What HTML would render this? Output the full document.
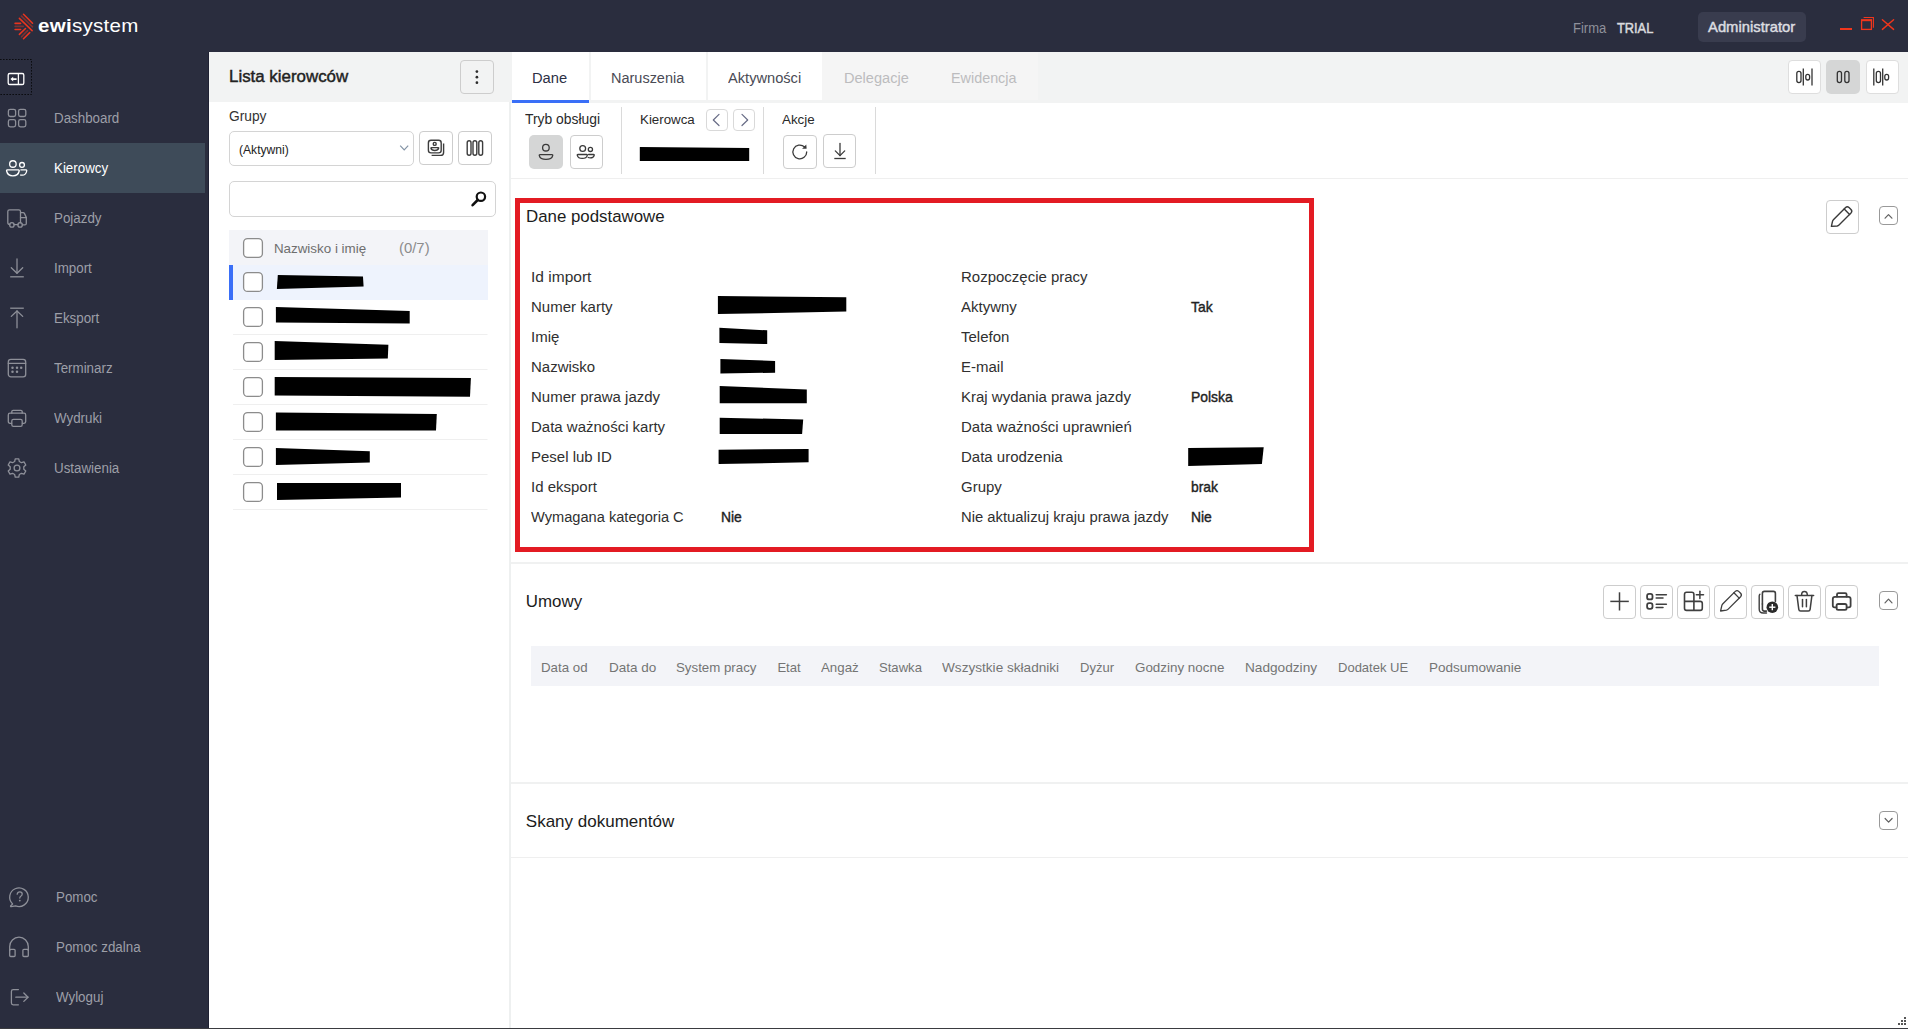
<!DOCTYPE html>
<html><head><meta charset="utf-8">
<style>
*{box-sizing:border-box;margin:0;padding:0}
html,body{width:1908px;height:1029px;overflow:hidden;background:#fff;font-family:"Liberation Sans",sans-serif;position:relative}
.a{position:absolute}
#top{left:0;top:0;width:1908px;height:52px;background:#2a2d3e}
#side{left:0;top:52px;width:209px;height:977px;background:#2a2d3e}
.mt{left:54px;font-size:14px;color:#a4a6ad;white-space:nowrap;line-height:16px}
.mt.on{color:#fff}
svg{overflow:visible}
.tx{white-space:nowrap;transform-origin:0 0}
.tab{top:68px;font-size:15px;line-height:18px;white-space:nowrap}
.lbl{font-size:13.5px;color:#2a2a2a;line-height:16px;white-space:nowrap}
.h2{font-size:16.5px;color:#1e1e1e;line-height:20px;white-space:nowrap}
.th{top:660px;font-size:13.5px;color:#7a7a7a;line-height:16px;white-space:nowrap}
.fl{font-size:14.7px;color:#262626;line-height:18px;white-space:nowrap}
.fv{font-size:14px;color:#1d1d1d;font-weight:bold;line-height:18px;white-space:nowrap}
.btn{border:1px solid #cdcdcd;border-radius:4px;background:#fff}
</style></head><body>
<div id="top" class="a">
<svg class="a" style="left:0;top:0" width="40" height="44" viewBox="0 0 40 44">
<g stroke="#e8351f" stroke-width="1.6" stroke-linecap="round" fill="none">
<line x1="23.5" y1="14.3" x2="32.5" y2="23.2"/>
<line x1="19.4" y1="18.4" x2="32.1" y2="30.6"/>
<line x1="15.1" y1="23.4" x2="20.6" y2="23.4"/>
<line x1="15.1" y1="29.5" x2="20.6" y2="29.5"/>
<line x1="19.4" y1="34.4" x2="25.5" y2="28.5"/>
<line x1="23.5" y1="38.7" x2="29.7" y2="32.6"/>
</g>
<g stroke="#e8351f" stroke-opacity="0.45" stroke-width="1.6" stroke-linecap="round" fill="none">
<line x1="21.4" y1="16.1" x2="32.5" y2="26.8"/>
<line x1="15.1" y1="26.4" x2="23.2" y2="26.4"/>
<line x1="21.6" y1="36.8" x2="27.5" y2="30.6"/>
</g>
</svg>
<div class="a" id="logo" style="left:38.3px;top:15px;font-size:19px;color:#fff;letter-spacing:0.25px;white-space:nowrap;transform:scaleX(1.08);transform-origin:0 0"><b>ewi</b>system</div>
<div class="a" style="left:1698px;top:12px;width:108px;height:30px;background:#393c4e;border-radius:5px"></div>
<svg class="a" style="left:0;top:0" width="1908" height="52" viewBox="0 0 1908 52">
<g stroke="#f0361c" fill="none">
<line x1="1840" y1="29" x2="1852" y2="29" stroke-width="2"/>
<rect x="1861.6" y="20.2" width="9.8" height="9.2" stroke-width="1.3"/>
<rect x="1861" y="19.2" width="11" height="2" fill="#f0361c" stroke="none"/>
<path d="M1863.6 17.5 H1873.4 V27.7" stroke-width="1.1"/>
<line x1="1882.4" y1="19.7" x2="1893.6" y2="29.4" stroke-width="1.4" stroke-linecap="round"/>
<line x1="1893.6" y1="19.7" x2="1882.4" y2="29.4" stroke-width="1.4" stroke-linecap="round"/>
</g></svg>
</div>
<div id="side" class="a">

</div>
<svg class="a" style="left:0;top:0" width="209" height="1029" viewBox="0 0 209 1029">
<rect x="0" y="143" width="205" height="50" fill="#3e4b59"/>
<path d="M0 59.5 H31.5 V94.5 H0" fill="none" stroke="#0b0c10" stroke-width="1" stroke-dasharray="1.6 1.4"/>
<g fill="none" stroke="#fff" stroke-width="1.3">
<rect x="8.2" y="73.5" width="15.6" height="11" rx="1.6"/>
<line x1="18.4" y1="73.5" x2="18.4" y2="84.5"/>
</g>
<path d="M10.4 79.1 L13.2 76.7 V78.3 H16.6 V79.9 H13.2 V81.5Z" fill="#fff"/>
<g fill="none" stroke="#8e9099" stroke-width="1.3" stroke-linejoin="round" stroke-linecap="round">
<rect x="8.4" y="109.3" width="7.2" height="7.2" rx="1.8"/>
<rect x="18.6" y="109.3" width="7.2" height="7.2" rx="1.8"/>
<rect x="8.4" y="119.7" width="7.2" height="7.2" rx="1.8"/>
<rect x="18.6" y="119.7" width="7.2" height="7.2" rx="1.8"/>
</g>
<g fill="none" stroke="#fff" stroke-width="1.3">
<circle cx="12.9" cy="164" r="3.25"/>
<circle cx="22" cy="164.9" r="2.4"/>
<path d="M7.1 169.9 H18.7 Q19.4 169.9 19.2 171 Q18.2 175.8 12.9 175.8 Q7.6 175.8 6.6 171 Q6.4 169.9 7.1 169.9Z"/>
<path d="M20.4 169.9 H26.2 Q26.9 169.9 26.7 171 Q25.9 175.2 22.3 175.2 Q21 175.2 20.2 174.8"/>
</g>
<g fill="none" stroke="#8e9099" stroke-width="1.3" stroke-linejoin="round" stroke-linecap="round">
<path d="M9.8 224.6 Q7.8 224.6 7.8 222.6 V211.6 Q7.8 209.9 9.5 209.9 H18.8 Q20.5 209.9 20.5 211.6 V222.8"/>
<path d="M20.5 212.6 H23.2 Q24 212.6 24.4 213.4 L26.3 217.4 V223.4 Q26.3 224.9 24.8 224.9 H22.4"/>
<line x1="20.5" y1="217.6" x2="26.3" y2="217.6"/>
<line x1="14.1" y1="224.6" x2="17.9" y2="224.6"/>
<circle cx="11.9" cy="224.9" r="2.2"/>
<circle cx="20.1" cy="224.9" r="2.2"/>
<line x1="17" y1="259" x2="17" y2="273"/>
<path d="M11.3 267.8 L17 273.3 L22.7 267.8"/>
<line x1="10.2" y1="276.8" x2="23.8" y2="276.8" stroke-linecap="butt"/>
<line x1="10.2" y1="308.2" x2="23.8" y2="308.2" stroke-linecap="butt"/>
<path d="M11.3 316.4 L17 311 L22.7 316.4"/>
<line x1="17" y1="311" x2="17" y2="327.8"/>
<rect x="8.3" y="359.4" width="17.4" height="17.4" rx="2.6"/>
<line x1="8.3" y1="363.3" x2="25.7" y2="363.3"/>
<path d="M11.8 413 V411.6 Q11.8 410.3 13.1 410.3 H20.9 Q22.2 410.3 22.2 411.6 V413"/>
<path d="M11.6 423.3 H10 Q8.3 423.3 8.3 421.6 V415 Q8.3 413.2 10 413.2 H24 Q25.7 413.2 25.7 415 V421.6 Q25.7 423.3 24 423.3 H22.4"/>
<rect x="11.8" y="419.4" width="10.4" height="6.9" rx="1.6"/>
<path d="M19.36 461.52 L18.77 458.87 L15.23 458.87 L14.64 461.52 L12.56 462.71 L9.98 461.90 L8.21 464.97 L10.20 466.80 L10.20 469.20 L8.21 471.03 L9.98 474.10 L12.56 473.29 L14.64 474.48 L15.23 477.13 L18.77 477.13 L19.36 474.48 L21.44 473.29 L24.02 474.10 L25.79 471.03 L23.80 469.20 L23.80 466.80 L25.79 464.97 L24.02 461.90 L21.44 462.71Z"/>
<circle cx="17" cy="468" r="2.9"/>
</g>
<g fill="#8e9099">
<circle cx="12.5" cy="367.7" r="1.25"/><circle cx="17" cy="367.7" r="1.25"/><circle cx="21.2" cy="367.7" r="1.25"/>
<circle cx="12.5" cy="371.8" r="1.25"/><circle cx="17" cy="371.8" r="1.25"/>
</g>
<g fill="none" stroke="#8e9099" stroke-width="1.3" stroke-linejoin="round" stroke-linecap="round">
<path d="M12.6 904 A9.3 9.3 0 1 1 15.6 905.9 L11.2 906.6 Q10.4 906.7 10.6 905.9Z"/>
<path d="M17.2 894.2 Q17.4 891.8 19.8 891.8 Q22.2 891.8 22.2 894 Q22.2 895.4 20.8 896.2 Q19.8 896.8 19.8 898"/>
<path d="M9.7 950.5 V946.5 A9.3 9.3 0 0 1 28.3 946.5 V950.5"/>
<rect x="9.7" y="949.3" width="5.4" height="7.2" rx="1"/>
<rect x="22.9" y="949.3" width="5.4" height="7.2" rx="1"/>
<path d="M18.4 989.6 H13.2 Q11.4 989.6 11.4 991.4 V1003 Q11.4 1004.8 13.2 1004.8 H18.4"/>
<line x1="15.8" y1="997.2" x2="28" y2="997.2"/>
<path d="M23.8 993 L28 997.2 L23.8 1001.4"/>
</g>
<circle cx="19.8" cy="900.6" r="0.9" fill="#8e9099"/>
<line x1="208.5" y1="52" x2="208.5" y2="1029" stroke="#1f2133" stroke-width="1"/>
</svg>

<!-- LEFT PANEL -->
<div class="a" style="left:209px;top:52px;width:1699px;height:50px;background:#f2f3f3"></div>
<div class="a" style="left:511px;top:102px;width:1397px;height:1px;background:#f2f3f3"></div>
<div class="a" style="left:509px;top:102px;width:2px;height:926px;background:#eef0f0"></div>
<div class="a btn" style="left:459.5px;top:59.5px;width:34.5px;height:34.5px;background:#f2f3f3"></div>
<svg class="a" style="left:0;top:0" width="510" height="1029" viewBox="0 0 510 1029">
<g fill="#2b2b2b"><circle cx="476.9" cy="71.6" r="1.35"/><circle cx="476.9" cy="77.2" r="1.35"/><circle cx="476.9" cy="82.7" r="1.35"/></g>
</svg>
<div class="a" style="left:229px;top:130.5px;width:184.5px;height:35px;border:1px solid #d4d4d4;border-radius:5px;background:#fff"></div>
<div class="a btn" style="left:419px;top:131px;width:33.5px;height:33.5px"></div>
<div class="a btn" style="left:458px;top:131px;width:33.5px;height:33.5px"></div>
<div class="a" style="left:229px;top:181px;width:266.5px;height:35.5px;border:1px solid #d4d4d4;border-radius:5px;background:#fff"></div>
<div class="a" style="left:229px;top:230px;width:258.5px;height:35px;background:#f3f4f8"></div>
<div class="a" style="left:229px;top:265px;width:258.5px;height:35px;background:#eef3fd"></div>
<div class="a" style="left:229px;top:265px;width:4px;height:35px;background:#3a6ff7"></div>
<svg class="a" style="left:0;top:0" width="510" height="1029" viewBox="0 0 510 1029">
<path d="M400.2 145.6 L404.2 149.9 L408.2 145.6" fill="none" stroke="#8494a6" stroke-width="1.2"/>
<g fill="none" stroke="#3d3d3d" stroke-width="1.4" stroke-linejoin="round">
<rect x="428.4" y="140.3" width="12.8" height="12.6" rx="2.6"/>
<circle cx="434.7" cy="143.9" r="1.5"/>
<path d="M431.4 147.6 H438.3 Q438.8 147.6 438.6 148.3 Q438 150.5 434.8 150.5 Q431.6 150.5 431 148.3 Q430.8 147.6 431.4 147.6Z"/>
<path d="M443.6 143.6 V152.4 Q443.6 155.4 440.6 155.4 H431.6"/>
<rect x="467.2" y="140.8" width="3.8" height="14.4" rx="1.9"/>
<rect x="473" y="140.8" width="3.8" height="14.4" rx="1.9"/>
<rect x="478.8" y="140.8" width="3.8" height="14.4" rx="1.9"/>
</g>
<g fill="none" stroke="#111" stroke-width="2.2" stroke-linecap="round">
<circle cx="480.9" cy="196.7" r="4.2"/>
<line x1="477.7" y1="200" x2="472.6" y2="205.2" stroke-width="2.6"/>
</g>
<g fill="none" stroke="#efefef" stroke-width="1">
<line x1="233" y1="334.5" x2="487.5" y2="334.5"/>
<line x1="233" y1="369.5" x2="487.5" y2="369.5"/>
<line x1="233" y1="404.5" x2="487.5" y2="404.5"/>
<line x1="233" y1="439.5" x2="487.5" y2="439.5"/>
<line x1="233" y1="474.5" x2="487.5" y2="474.5"/>
<line x1="233" y1="509.5" x2="487.5" y2="509.5"/>
</g>
<g fill="#fff" stroke="#8c8c8c" stroke-width="1.3">
<rect x="243.6" y="238.6" width="18.8" height="18.8" rx="4"/>
<rect x="243.6" y="272.6" width="18.8" height="18.8" rx="4"/>
<rect x="243.6" y="307.6" width="18.8" height="18.8" rx="4"/>
<rect x="243.6" y="342.6" width="18.8" height="18.8" rx="4"/>
<rect x="243.6" y="377.6" width="18.8" height="18.8" rx="4"/>
<rect x="243.6" y="412.6" width="18.8" height="18.8" rx="4"/>
<rect x="243.6" y="447.6" width="18.8" height="18.8" rx="4"/>
<rect x="243.6" y="482.6" width="18.8" height="18.8" rx="4"/>
</g>
<g fill="#000">
<polygon points="277.8,275.1 363,276.6 363.6,286.5 276.9,288.9"/>
<polygon points="275.9,306.9 409.7,311 409.7,323.5 275.9,322.6"/>
<polygon points="274.7,341 388.4,344.8 387.8,358.5 274.7,359.9"/>
<polygon points="274.7,376.9 470.9,378 470,396.7 274.7,395.5"/>
<polygon points="275.9,412.4 436.8,413.9 436,430.5 275.9,430.5"/>
<polygon points="275.9,448 369.8,451.2 369.8,462.6 275.9,464.9"/>
<polygon points="277,483 401,483 401,497.6 277,499.9"/>
</g>
</svg>

<!-- RIGHT PANEL -->
<div class="a" style="left:512px;top:52px;width:76.5px;height:48px;background:#fff"></div>
<div class="a" style="left:512px;top:99.6px;width:76.8px;height:3px;background:#3a6ff7"></div>
<div class="a" style="left:590.8px;top:52px;width:115.3px;height:48px;background:#fff"></div>
<div class="a" style="left:707.5px;top:52px;width:114.5px;height:48px;background:#fff"></div>
<div class="a" style="left:822px;top:52px;width:108.2px;height:48px;background:#f5f5f5"></div>
<div class="a" style="left:930.2px;top:52px;width:108px;height:48px;background:#f5f5f5"></div>
<div class="a btn" style="left:1787.5px;top:60.3px;width:33px;height:33.3px;border-color:#dedede"></div>
<div class="a" style="left:1826.4px;top:60.3px;width:33.2px;height:33.3px;background:#d5d6d6;border-radius:5px"></div>
<div class="a btn" style="left:1865.5px;top:60.3px;width:33px;height:33.3px;border-color:#dedede"></div>

<div class="a" style="left:529px;top:135px;width:34px;height:34px;background:#d5d6d6;border-radius:5px"></div>
<div class="a btn" style="left:569.5px;top:135px;width:33.2px;height:34px"></div>
<div class="a" style="left:621px;top:107px;width:1px;height:67px;background:#dadada"></div>
<div class="a btn" style="left:706px;top:109.4px;width:21.7px;height:21.3px;border-color:#d9d9d9"></div>
<div class="a btn" style="left:733.4px;top:109.4px;width:21.2px;height:21.3px;border-color:#d9d9d9"></div>
<div class="a" style="left:763px;top:107px;width:1px;height:67px;background:#dadada"></div>
<div class="a btn" style="left:783.2px;top:135.2px;width:33.6px;height:33.4px"></div>
<div class="a btn" style="left:823.3px;top:134.4px;width:33.2px;height:33.3px"></div>
<div class="a" style="left:875px;top:107px;width:1px;height:67px;background:#dadada"></div>
<div class="a" style="left:511px;top:177.5px;width:1397px;height:1px;background:#efefef"></div>

<div class="a" style="left:515px;top:198px;width:799px;height:353.5px;border:5px solid #e31b23"></div>
<svg class="a" style="left:0;top:0" width="1908" height="1029" viewBox="0 0 1908 1029"><g fill="#000">
<polygon points="717.9,296.1 846.3,297.2 846.3,311.6 717.9,314.1"/>
<polygon points="719.4,327.8 767.2,330.3 767.2,344 719.4,342.9"/>
<polygon points="720.4,359.1 775.1,360.9 775.1,372.7 720.4,373.5"/>
<polygon points="719.7,386 806.8,389.6 806.8,403.3 719.7,403.3"/>
<polygon points="719.7,417.7 803.2,419.5 802.1,433.9 719.7,433.9"/>
<polygon points="718.6,449.7 808.6,449 808.6,462.3 718.6,464.1"/>
<polygon points="1188.2,447.9 1263.7,447.2 1261.9,464.1 1188.2,465.9"/>
<polygon points="639.8,147 749.2,148.1 749.2,161 639.8,161"/>
</g></svg>
<div class="a btn" style="left:1825.5px;top:200.3px;width:33px;height:33.3px"></div>
<div class="a btn" style="left:1879.1px;top:206.1px;width:18.6px;height:18.6px;border-color:#999;border-radius:4px"></div>
<div class="a" style="left:511px;top:562px;width:1397px;height:2px;background:#f0f1f1"></div>

<div class="a btn" style="left:1603.3px;top:585.3px;width:33.1px;height:33.4px"></div>
<div class="a btn" style="left:1640.3px;top:585.3px;width:33.1px;height:33.4px"></div>
<div class="a btn" style="left:1677.2px;top:585.3px;width:33.1px;height:33.4px"></div>
<div class="a btn" style="left:1714.4px;top:585.3px;width:33.1px;height:33.4px"></div>
<div class="a btn" style="left:1751.3px;top:585.3px;width:33.1px;height:33.4px"></div>
<div class="a btn" style="left:1788.4px;top:585.3px;width:33.1px;height:33.4px"></div>
<div class="a btn" style="left:1825.3px;top:585.3px;width:33.1px;height:33.4px"></div>
<div class="a btn" style="left:1879.2px;top:591.4px;width:18.6px;height:18.6px;border-color:#999;border-radius:4px"></div>
<div class="a" style="left:531px;top:646px;width:1348px;height:39.5px;background:#f3f4f8"></div>
<div class="a" style="left:511px;top:782px;width:1397px;height:2px;background:#f0f1f1"></div>

<div class="a btn" style="left:1879.3px;top:811.2px;width:18.6px;height:18.6px;border-color:#999;border-radius:4px"></div>
<div class="a" style="left:511px;top:857px;width:1397px;height:1px;background:#efefef"></div>
<svg class="a" style="left:0;top:0" width="1908" height="1029" viewBox="0 0 1908 1029">
<g fill="none" stroke="#3a3a3a" stroke-width="1.3" stroke-linejoin="round" stroke-linecap="round">
<!-- person -->
<circle cx="545.9" cy="147.7" r="3.3"/>
<path d="M540 154.6 H552 Q552.9 154.6 552.7 155.6 Q551.8 159.4 546 159.4 Q540.2 159.4 539.3 155.6 Q539.1 154.6 540 154.6Z"/>
<!-- people -->
<circle cx="582.7" cy="148.5" r="2.9"/>
<circle cx="590.4" cy="149.4" r="2.1"/>
<path d="M577.9 154.5 H586.7 Q587.5 154.5 587.3 155.3 Q586.5 158.4 582.3 158.4 Q578.1 158.4 577.3 155.3 Q577.1 154.5 577.9 154.5Z"/>
<path d="M588.6 154.5 H593.6 Q594.4 154.5 594.2 155.3 Q593.6 157.9 590.3 157.9 Q589 157.9 588.2 157.5"/>
<!-- refresh -->
<path d="M806.7 151.9 A6.9 6.9 0 1 1 804.4 146.8"/>
<!-- download -->
<line x1="840" y1="143.4" x2="840" y2="155.5"/>
<path d="M835.3 150.9 L840 155.6 L844.7 150.9"/>
<line x1="834.3" y1="158.5" x2="845.7" y2="158.5" stroke-linecap="butt"/>
</g>
<g fill="none" stroke="#686c86" stroke-width="1.2" stroke-linejoin="round" stroke-linecap="round">
<path d="M719 114.4 L713.3 120 L719 125.5"/>
<path d="M742 114.4 L747.7 120 L742 125.5"/>
</g>
<polygon points="802.1,148.7 806.3,144.6 806.6,148.7" fill="#3a3a3a"/>
<!-- layout icons -->
<g fill="none" stroke="#333" stroke-width="1.3" stroke-linejoin="round">
<rect x="1796.8" y="71.4" width="4.2" height="11.3" rx="2.1"/>
<line x1="1803.3" y1="68.5" x2="1803.3" y2="85.4"/>
<rect x="1805.8" y="74.3" width="3.8" height="5.7" rx="1.9"/>
<line x1="1812" y1="68.5" x2="1812" y2="85.4"/>
<rect x="1837.3" y="71.4" width="4.2" height="11.3" rx="2.1"/>
<rect x="1844.8" y="71.4" width="4.2" height="11.3" rx="2.1"/>
<line x1="1873.8" y1="68.5" x2="1873.8" y2="85.4"/>
<rect x="1876.3" y="71.4" width="4.2" height="11.3" rx="2.1"/>
<line x1="1882.7" y1="68.5" x2="1882.7" y2="85.4"/>
<rect x="1884.8" y="74.3" width="3.8" height="5.7" rx="1.9"/>
</g>
<!-- pencil edit (Dane) -->
<g fill="none" stroke="#3a3a3a" stroke-width="1.4" stroke-linejoin="round" stroke-linecap="round">
<path d="M1831.4 226.4 L1832.5 221.4 Q1832.8 220.4 1833.6 219.6 L1845.6 207.6 Q1847.3 206 1849 207.6 L1851 209.6 Q1852.6 211.3 1851 213 L1839 225 Q1838.2 225.8 1837.2 226 Z"/>
<line x1="1844.2" y1="209" x2="1849.6" y2="214.4"/>
<!-- chevrons -->
<g stroke="#606060" stroke-width="1.2">
<path d="M1885.1 218.2 L1888.5 214.6 L1891.9 218.2"/>
<path d="M1885 602.8 L1888.5 599.2 L1892 602.8"/>
<path d="M1885.1 818.5 L1888.6 822.1 L1892.1 818.5"/>
</g>
</g>
<g fill="none" stroke="#3f3f3f" stroke-width="1.5" stroke-linejoin="round" stroke-linecap="round">
<!-- plus -->
<line x1="1610.3" y1="601.4" x2="1628.8" y2="601.4" stroke-linecap="butt"/>
<line x1="1619.5" y1="592.3" x2="1619.5" y2="610.5" stroke-linecap="butt"/>
<!-- list -->
<rect x="1647.1" y="593.8" width="5.4" height="5.6" rx="2" stroke-width="1.8"/>
<rect x="1647.1" y="603.2" width="5.4" height="5.6" rx="2" stroke-width="1.8"/>
<line x1="1656.2" y1="594.8" x2="1666.4" y2="594.8"/>
<line x1="1656.2" y1="598.1" x2="1663" y2="598.1"/>
<line x1="1656.2" y1="604.2" x2="1666.4" y2="604.2"/>
<line x1="1656.2" y1="607.5" x2="1663" y2="607.5"/>
<!-- grid add -->
<path d="M1684.5 601.4 V594.4 Q1684.5 592.3 1686.6 592.3 H1691.8 Q1693.9 592.3 1693.9 594.4 V610.4 M1684.5 601.4 V608.3 Q1684.5 610.4 1686.6 610.4 H1700.2 Q1702.3 610.4 1702.3 608.3 V603.5 Q1702.3 601.4 1700.2 601.4 H1684.5" stroke-width="1.6"/>
<line x1="1699.9" y1="591.2" x2="1699.9" y2="598.4"/>
<line x1="1696.3" y1="594.8" x2="1703.5" y2="594.8"/>
<!-- pencil -->
<path d="M1720.6 611 L1721.8 605.6 Q1722.1 604.6 1722.9 603.8 L1735.3 591.4 Q1737 589.8 1738.7 591.4 L1740.6 593.3 Q1742.2 595 1740.6 596.7 L1728.2 609.1 Q1727.4 609.9 1726.4 610.1 Z" stroke-width="1.3"/>
<line x1="1733.9" y1="592.8" x2="1739.2" y2="598.1" stroke-width="1.3"/>
<!-- copy add -->
<path d="M1762.4 604 V593.4 Q1762.4 591.4 1764.4 591.4 H1773.4 Q1775.4 591.4 1775.4 593.4 V601.4" stroke-width="1.6"/>
<path d="M1762.4 604 V609.1 Q1762.4 611.1 1764.4 611.1 H1766.5" stroke-width="1.6"/>
<path d="M1759.9 594.2 Q1759.2 594.8 1759.2 596 V609 Q1759.2 613 1763.2 613 H1766.5" stroke-width="1.4"/>
<!-- trash -->
<line x1="1795.3" y1="595.4" x2="1813.6" y2="595.4"/>
<path d="M1801.6 595.2 Q1801.6 591.6 1804.4 591.6 Q1807.3 591.6 1807.3 595.2"/>
<path d="M1797 595.6 L1798.8 609.4 Q1799 611 1800.6 611 H1808.3 Q1809.9 611 1810.1 609.4 L1811.9 595.6"/>
<line x1="1802.5" y1="599.4" x2="1802.5" y2="606.8"/>
<line x1="1806.4" y1="599.4" x2="1806.4" y2="606.8"/>
<!-- printer -->
<path d="M1837 596.5 V594.6 Q1837 593.2 1838.4 593.2 H1845.2 Q1846.6 593.2 1846.6 594.6 V596.5" stroke-width="1.8"/>
<path d="M1836.4 607.4 H1834.6 Q1832.8 607.4 1832.8 605.6 V599 Q1832.8 596.8 1835 596.8 H1848.4 Q1850.6 596.8 1850.6 599 V605.6 Q1850.6 607.4 1848.8 607.4 H1846.8" stroke-width="1.8"/>
<rect x="1836.6" y="604" width="10" height="5.8" rx="1.6" stroke-width="1.8"/>
</g>
<circle cx="1772.3" cy="607.2" r="5.8" fill="#2a2a2a"/>
<g stroke="#fff" stroke-width="1.4"><line x1="1769.2" y1="607.2" x2="1775.4" y2="607.2"/><line x1="1772.3" y1="604.1" x2="1772.3" y2="610.3"/></g>
<!-- resize grip -->
<g fill="#555">
<rect x="1904" y="1017" width="2" height="2"/>
<rect x="1901" y="1020" width="2" height="2"/><rect x="1904" y="1020" width="2" height="2"/>
<rect x="1898" y="1023" width="2" height="2"/><rect x="1901" y="1023" width="2" height="2"/><rect x="1904" y="1023" width="2" height="2"/>
</g>
</svg>
<div class="a tx" style="left:1572.80px;top:21px;font-size:14.0px;line-height:14.0px;color:#8f919b;transform:scaleX(0.9306);">Firma</div>
<div class="a tx" style="left:1617.10px;top:21px;font-size:14.0px;line-height:14.0px;color:#d9dadd;transform:scaleX(0.9142);-webkit-text-stroke:0.5px #d9dadd;">TRIAL</div>
<div class="a tx" style="left:1708.20px;top:20px;font-size:14.6px;line-height:14.6px;color:#dcdde0;transform:scaleX(1.0146);-webkit-text-stroke:0.45px #dcdde0;">Administrator</div>
<div class="a tx" style="left:54.00px;top:112px;font-size:13.8px;line-height:13.8px;color:#9d9fa8;transform:scaleX(0.9673);">Dashboard</div>
<div class="a tx" style="left:54.00px;top:162px;font-size:13.8px;line-height:13.8px;color:#ffffff;transform:scaleX(0.9673);">Kierowcy</div>
<div class="a tx" style="left:54.00px;top:212px;font-size:13.8px;line-height:13.8px;color:#9d9fa8;transform:scaleX(0.9673);">Pojazdy</div>
<div class="a tx" style="left:54.00px;top:262px;font-size:13.8px;line-height:13.8px;color:#9d9fa8;transform:scaleX(0.9673);">Import</div>
<div class="a tx" style="left:54.00px;top:312px;font-size:13.8px;line-height:13.8px;color:#9d9fa8;transform:scaleX(0.9673);">Eksport</div>
<div class="a tx" style="left:54.00px;top:362px;font-size:13.8px;line-height:13.8px;color:#9d9fa8;transform:scaleX(0.9673);">Terminarz</div>
<div class="a tx" style="left:54.00px;top:412px;font-size:13.8px;line-height:13.8px;color:#9d9fa8;transform:scaleX(0.9673);">Wydruki</div>
<div class="a tx" style="left:54.00px;top:462px;font-size:13.8px;line-height:13.8px;color:#9d9fa8;transform:scaleX(0.9673);">Ustawienia</div>
<div class="a tx" style="left:55.80px;top:891px;font-size:13.8px;line-height:13.8px;color:#9d9fa8;transform:scaleX(0.9673);">Pomoc</div>
<div class="a tx" style="left:55.80px;top:941px;font-size:13.8px;line-height:13.8px;color:#9d9fa8;transform:scaleX(0.9673);">Pomoc zdalna</div>
<div class="a tx" style="left:55.80px;top:991px;font-size:13.8px;line-height:13.8px;color:#9d9fa8;transform:scaleX(0.9673);">Wyloguj</div>
<div class="a tx" style="left:229.00px;top:68px;font-size:17.1px;line-height:17.1px;color:#222;transform:scaleX(0.9881);-webkit-text-stroke:0.45px #222;">Lista kierowców</div>
<div class="a tx" style="left:228.60px;top:109px;font-size:14.0px;line-height:14.0px;color:#333;transform:scaleX(0.9837);">Grupy</div>
<div class="a tx" style="left:238.80px;top:144px;font-size:12.2px;line-height:12.2px;color:#222;transform:scaleX(0.9929);">(Aktywni)</div>
<div class="a tx" style="left:273.90px;top:242px;font-size:13.4px;line-height:13.4px;color:#6e6e6e;">Nazwisko i imię</div>
<div class="a tx" style="left:398.70px;top:241px;font-size:14.1px;line-height:14.1px;color:#8c8c8c;transform:scaleX(1.0556);">(0/7)</div>
<div class="a tx" style="left:532.20px;top:70px;font-size:15.2px;line-height:15.2px;color:#2c3045;transform:scaleX(0.9685);">Dane</div>
<div class="a tx" style="left:611.00px;top:70px;font-size:15.1px;line-height:15.1px;color:#4a4b55;transform:scaleX(0.9595);">Naruszenia</div>
<div class="a tx" style="left:727.80px;top:70px;font-size:15.1px;line-height:15.1px;color:#4a4b55;transform:scaleX(0.9693);">Aktywności</div>
<div class="a tx" style="left:843.70px;top:70px;font-size:15.1px;line-height:15.1px;color:#bcbcbe;transform:scaleX(0.9650);">Delegacje</div>
<div class="a tx" style="left:951.20px;top:70px;font-size:15.0px;line-height:15.0px;color:#bcbcbe;transform:scaleX(0.9578);">Ewidencja</div>
<div class="a tx" style="left:525.40px;top:112px;font-size:14.0px;line-height:14.0px;color:#2a2a2a;transform:scaleX(0.9916);">Tryb obsługi</div>
<div class="a tx" style="left:639.60px;top:113px;font-size:13.7px;line-height:13.7px;color:#2a2a2a;transform:scaleX(0.9723);">Kierowca</div>
<div class="a tx" style="left:781.50px;top:113px;font-size:13.7px;line-height:13.7px;color:#2a2a2a;transform:scaleX(0.9762);">Akcje</div>
<div class="a tx" style="left:526.20px;top:208px;font-size:17.1px;line-height:17.1px;color:#1c1c1c;transform:scaleX(0.9858);">Dane podstawowe</div>
<div class="a tx" style="left:531.00px;top:269px;font-size:15.3px;line-height:15.3px;color:#303030;transform:scaleX(1.0148);">Id import</div>
<div class="a tx" style="left:960.80px;top:269px;font-size:15.3px;line-height:15.3px;color:#303030;transform:scaleX(0.9797);">Rozpoczęcie pracy</div>
<div class="a tx" style="left:531.00px;top:299px;font-size:15.3px;line-height:15.3px;color:#303030;transform:scaleX(0.9797);">Numer karty</div>
<div class="a tx" style="left:960.80px;top:299px;font-size:15.3px;line-height:15.3px;color:#303030;transform:scaleX(0.9797);">Aktywny</div>
<div class="a tx" style="left:531.00px;top:329px;font-size:15.3px;line-height:15.3px;color:#303030;transform:scaleX(0.9797);">Imię</div>
<div class="a tx" style="left:960.80px;top:329px;font-size:15.3px;line-height:15.3px;color:#303030;transform:scaleX(0.9797);">Telefon</div>
<div class="a tx" style="left:531.00px;top:359px;font-size:15.3px;line-height:15.3px;color:#303030;transform:scaleX(0.9797);">Nazwisko</div>
<div class="a tx" style="left:960.80px;top:359px;font-size:15.3px;line-height:15.3px;color:#303030;transform:scaleX(0.9797);">E-mail</div>
<div class="a tx" style="left:531.00px;top:389px;font-size:15.3px;line-height:15.3px;color:#303030;transform:scaleX(0.9797);">Numer prawa jazdy</div>
<div class="a tx" style="left:960.80px;top:389px;font-size:15.3px;line-height:15.3px;color:#303030;transform:scaleX(0.9797);">Kraj wydania prawa jazdy</div>
<div class="a tx" style="left:531.00px;top:419px;font-size:15.3px;line-height:15.3px;color:#303030;transform:scaleX(0.9797);">Data ważności karty</div>
<div class="a tx" style="left:960.80px;top:419px;font-size:15.3px;line-height:15.3px;color:#303030;transform:scaleX(0.9797);">Data ważności uprawnień</div>
<div class="a tx" style="left:531.00px;top:449px;font-size:15.3px;line-height:15.3px;color:#303030;transform:scaleX(0.9797);">Pesel lub ID</div>
<div class="a tx" style="left:960.80px;top:449px;font-size:15.3px;line-height:15.3px;color:#303030;transform:scaleX(0.9797);">Data urodzenia</div>
<div class="a tx" style="left:531.00px;top:479px;font-size:15.3px;line-height:15.3px;color:#303030;transform:scaleX(0.9797);">Id eksport</div>
<div class="a tx" style="left:960.80px;top:479px;font-size:15.3px;line-height:15.3px;color:#303030;transform:scaleX(0.9797);">Grupy</div>
<div class="a tx" style="left:531.00px;top:509px;font-size:15.3px;line-height:15.3px;color:#303030;transform:scaleX(0.9560);">Wymagana kategoria C</div>
<div class="a tx" style="left:960.80px;top:509px;font-size:15.3px;line-height:15.3px;color:#303030;transform:scaleX(0.9683);">Nie aktualizuj kraju prawa jazdy</div>
<div class="a tx" style="left:1190.50px;top:300px;font-size:14.8px;line-height:14.8px;color:#222;transform:scaleX(0.9376);-webkit-text-stroke:0.4px #222;">Tak</div>
<div class="a tx" style="left:1190.50px;top:390px;font-size:14.8px;line-height:14.8px;color:#222;transform:scaleX(0.9376);-webkit-text-stroke:0.4px #222;">Polska</div>
<div class="a tx" style="left:1190.50px;top:480px;font-size:14.8px;line-height:14.8px;color:#222;transform:scaleX(0.9376);-webkit-text-stroke:0.4px #222;">brak</div>
<div class="a tx" style="left:1190.50px;top:510px;font-size:14.8px;line-height:14.8px;color:#222;transform:scaleX(0.9376);-webkit-text-stroke:0.4px #222;">Nie</div>
<div class="a tx" style="left:720.70px;top:510px;font-size:14.8px;line-height:14.8px;color:#222;transform:scaleX(0.9376);-webkit-text-stroke:0.4px #222;">Nie</div>
<div class="a tx" style="left:525.80px;top:594px;font-size:16.9px;line-height:16.9px;color:#1c1c1c;">Umowy</div>
<div class="a tx" style="left:525.80px;top:813px;font-size:17.0px;line-height:17.0px;color:#1c1c1c;">Skany dokumentów</div>
<div class="a tx" style="left:540.80px;top:661px;font-size:13.2px;line-height:13.2px;color:#747474;transform:scaleX(1.0081);">Data od</div>
<div class="a tx" style="left:608.80px;top:661px;font-size:13.3px;line-height:13.3px;color:#747474;transform:scaleX(1.0155);">Data do</div>
<div class="a tx" style="left:676.30px;top:661px;font-size:13.2px;line-height:13.2px;color:#747474;transform:scaleX(1.0068);">System pracy</div>
<div class="a tx" style="left:777.40px;top:661px;font-size:13.1px;line-height:13.1px;color:#747474;">Etat</div>
<div class="a tx" style="left:821.30px;top:661px;font-size:13.2px;line-height:13.2px;color:#747474;transform:scaleX(1.0074);">Angaż</div>
<div class="a tx" style="left:879.00px;top:661px;font-size:13.1px;line-height:13.1px;color:#747474;">Stawka</div>
<div class="a tx" style="left:942.00px;top:661px;font-size:13.4px;line-height:13.4px;color:#747474;transform:scaleX(1.0155);">Wszystkie składniki</div>
<div class="a tx" style="left:1079.50px;top:661px;font-size:13.1px;line-height:13.1px;color:#747474;transform:scaleX(0.9940);">Dyżur</div>
<div class="a tx" style="left:1134.50px;top:661px;font-size:13.3px;line-height:13.3px;color:#747474;transform:scaleX(1.0076);">Godziny nocne</div>
<div class="a tx" style="left:1244.60px;top:661px;font-size:13.4px;line-height:13.4px;color:#747474;transform:scaleX(1.0189);">Nadgodziny</div>
<div class="a tx" style="left:1337.70px;top:661px;font-size:13.1px;line-height:13.1px;color:#747474;transform:scaleX(0.9938);">Dodatek UE</div>
<div class="a tx" style="left:1428.80px;top:661px;font-size:13.4px;line-height:13.4px;color:#747474;transform:scaleX(1.0086);">Podsumowanie</div>
<div class="a" style="left:0;top:1028px;width:1908px;height:1px;background:#3a3b40"></div>

</body></html>
